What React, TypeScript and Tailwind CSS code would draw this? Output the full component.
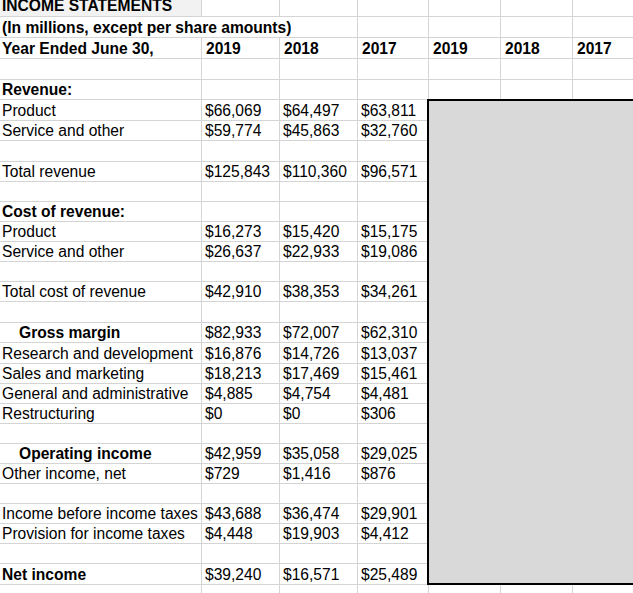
import React from 'react';

type Row = {
    h: string;
    label?: string;
    bold?: boolean;
    indent?: boolean;
    vals?: string[];
};

const rows: Row[] = [
    { h: 'h-[21px]' },
    { h: 'h-[20px]', label: 'Revenue:', bold: true },
    { h: 'h-[21px]', label: 'Product', vals: ['$66,069', '$64,497', '$63,811'] },
    { h: 'h-[20px]', label: 'Service and other', vals: ['$59,774', '$45,863', '$32,760'] },
    { h: 'h-[21px]' },
    { h: 'h-[20px]', label: 'Total revenue', vals: ['$125,843', '$110,360', '$96,571'] },
    { h: 'h-[20px]' },
    { h: 'h-[20px]', label: 'Cost of revenue:', bold: true },
    { h: 'h-[20px]', label: 'Product', vals: ['$16,273', '$15,420', '$15,175'] },
    { h: 'h-[20px]', label: 'Service and other', vals: ['$26,637', '$22,933', '$19,086'] },
    { h: 'h-[20px]' },
    { h: 'h-[20px]', label: 'Total cost of revenue', vals: ['$42,910', '$38,353', '$34,261'] },
    { h: 'h-[21px]' },
    { h: 'h-[20px]', label: 'Gross margin', bold: true, indent: true, vals: ['$82,933', '$72,007', '$62,310'] },
    { h: 'h-[21px]', label: 'Research and development', vals: ['$16,876', '$14,726', '$13,037'] },
    { h: 'h-[20px]', label: 'Sales and marketing', vals: ['$18,213', '$17,469', '$15,461'] },
    { h: 'h-[20px]', label: 'General and administrative', vals: ['$4,885', '$4,754', '$4,481'] },
    { h: 'h-[20px]', label: 'Restructuring', vals: ['$0', '$0', '$306'] },
    { h: 'h-[20px]' },
    { h: 'h-[20px]', label: 'Operating income', bold: true, indent: true, vals: ['$42,959', '$35,058', '$29,025'] },
    { h: 'h-[20px]', label: 'Other income, net', vals: ['$729', '$1,416', '$876'] },
    { h: 'h-[20px]' },
    { h: 'h-[20px]', label: 'Income before income taxes', vals: ['$43,688', '$36,474', '$29,901'] },
    { h: 'h-[20px]', label: 'Provision for income taxes', vals: ['$4,448', '$19,903', '$4,412'] },
    { h: 'h-[20px]' },
    { h: 'h-[21px]', label: 'Net income', bold: true, vals: ['$39,240', '$16,571', '$25,489'] },
    { h: 'h-[21px]' },
];

// cell widths include the 1px right gridline
const colW = ['w-[78px]', 'w-[78px]', 'w-[71px]', 'w-[72px]', 'w-[72px]', 'w-[80px]'];

const Cell = ({ w, children, bold, className = '' }: { w: string; children?: React.ReactNode; bold?: boolean; className?: string }) => (
    <div className={`${w} shrink-0 h-full border-r border-[#d4d4d4] flex items-end pl-[3px] whitespace-nowrap ${bold ? 'font-bold' : ''} ${className}`}>
        <span className="leading-[18px]">{children}</span>
    </div>
);

const App = () => {
    return (
        <div className="relative w-[633px] h-[593px] overflow-hidden bg-white text-black text-[15.6px] font-['Liberation_Sans',Arial,sans-serif]">
            {/* title row, clipped at the top */}
            <div className="flex h-[17px] border-b border-[#d4d4d4] overflow-hidden">
                <div className="w-[202px] shrink-0 h-full bg-[#f2f2f2] border-r border-[#d4d4d4] flex items-end pl-[2px] font-bold">
                    <span className="leading-[18px] mb-[1px]">INCOME STATEMENTS</span>
                </div>
                {colW.map((w, i) => <Cell key={i} w={w} />)}
            </div>

            {/* subtitle spills across three columns */}
            <div className="flex h-[21px] border-b border-[#d4d4d4]">
                <div className="w-[358px] shrink-0 h-full border-r border-[#d4d4d4] flex items-end pl-[2px] font-bold whitespace-nowrap">
                    <span className="leading-[18px]">(In millions, except per share amounts)</span>
                </div>
                {colW.slice(2).map((w, i) => <Cell key={i} w={w} />)}
            </div>

            {/* year header */}
            <div className="flex h-[21px] border-b border-[#d4d4d4] font-bold">
                <div className="w-[202px] shrink-0 h-full border-r border-[#d4d4d4] flex items-end pl-[2px]">
                    <span className="leading-[18px]">Year Ended June 30,</span>
                </div>
                {['2019', '2018', '2017', '2019', '2018', '2017'].map((y, i) => (
                    <Cell key={i} w={colW[i]} className="pl-[4px]">{y}</Cell>
                ))}
            </div>

            {rows.map((r, idx) => (
                <div key={idx} className={`flex ${r.h} border-b border-[#d4d4d4]`}>
                    <div className={`w-[202px] shrink-0 h-full border-r border-[#d4d4d4] flex items-end whitespace-nowrap ${r.indent ? 'pl-[19px]' : 'pl-[2px]'} ${r.bold ? 'font-bold' : ''}`}>
                        <span className="leading-[18px]">{r.label}</span>
                    </div>
                    {colW.map((w, i) => (
                        <Cell key={i} w={w}>{r.vals && i < 3 ? r.vals[i] : ''}</Cell>
                    ))}
                </div>
            ))}

            {/* grey shape laid over the right-hand columns */}
            <div className="absolute left-[427px] top-[99px] w-[220px] h-[486px] bg-[#d9d9d9] border-2 border-r-0 border-black" />
        </div>
    );
};

export default App;
